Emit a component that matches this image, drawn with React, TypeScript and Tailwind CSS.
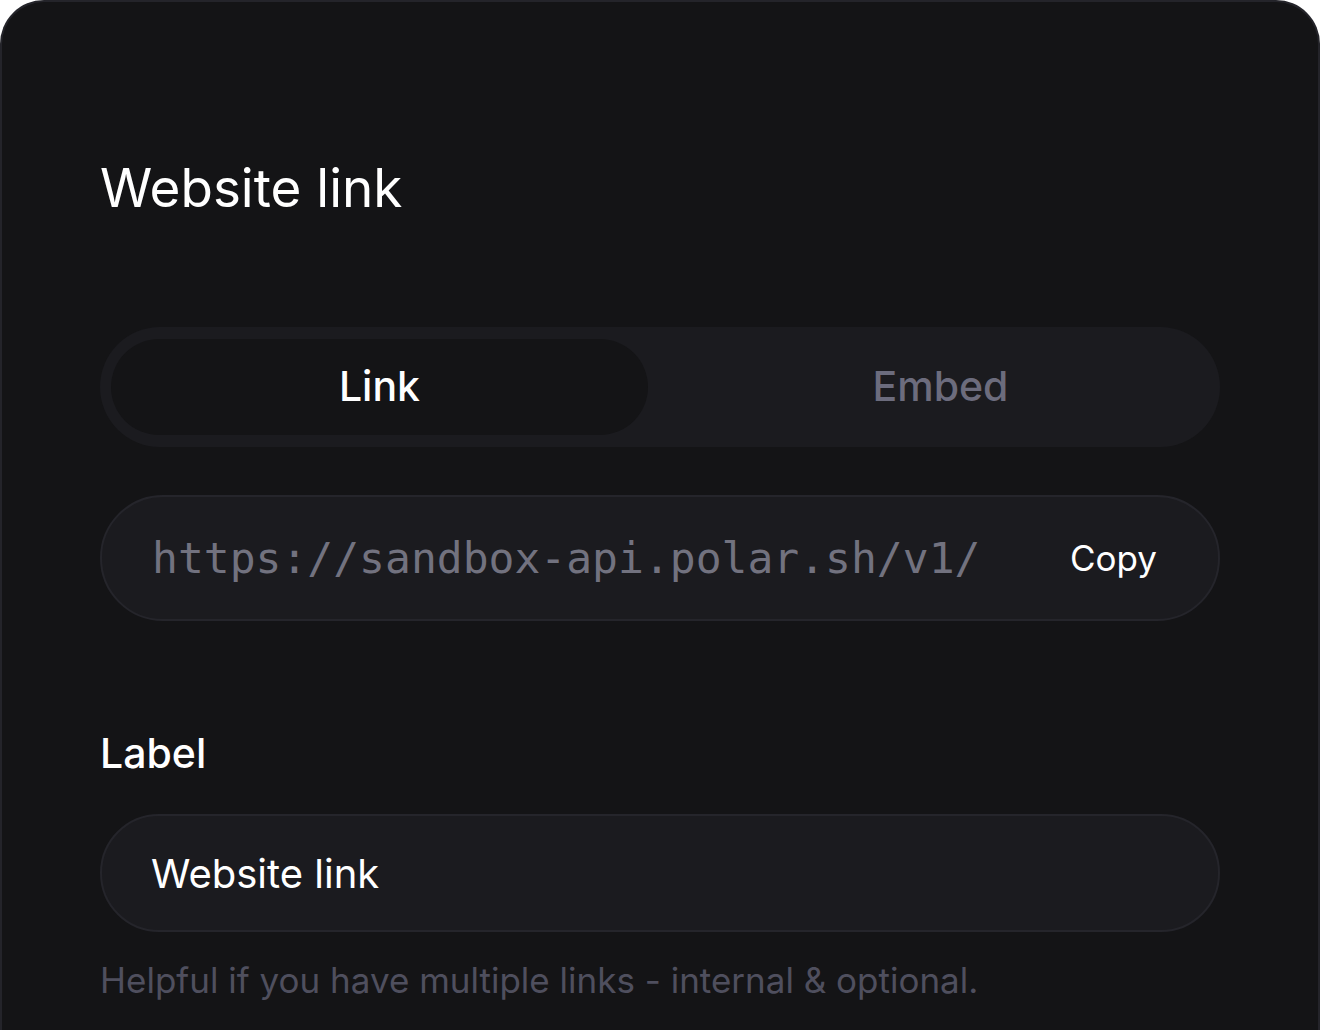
import { useState } from 'react';

const URL = 'https://sandbox-api.polar.sh/v1/';

export default function App() {
  const [tab, setTab] = useState<'link' | 'embed'>('link');
  const [label, setLabel] = useState('Website link');

  return (
    <div className="min-h-screen bg-white" style={{ fontFamily: 'Inter, "Noto Sans", sans-serif' }}>
      <div className="min-h-[1030px] w-full rounded-t-[44px] border-2 border-b-0 border-[#24242a] bg-[#141416] px-[98px] pt-[157px]">
        <h1 className="text-[53px] leading-[58px] font-normal text-white">Website link</h1>

        {/* Link / Embed switch */}
        <div className="mt-[110px] grid h-[120px] grid-cols-2 gap-[24px] rounded-full bg-[#1b1b1f] px-[11px] py-[12px]">
          <button
            onClick={() => setTab('link')}
            className={`rounded-full text-[41px] font-medium ${tab === 'link' ? 'bg-[#141416] text-white' : 'text-[#6c6c7d]'}`}
          >
            Link
          </button>
          <button
            onClick={() => setTab('embed')}
            className={`rounded-full text-[41px] font-medium ${tab === 'embed' ? 'bg-[#141416] text-white' : 'text-[#6c6c7d]'}`}
          >
            Embed
          </button>
        </div>

        {/* URL + copy */}
        <div className="mt-[48px] flex h-[126px] items-center justify-between rounded-full border-2 border-[#25252b] bg-[#1b1b1f] pl-[50px] pr-[61px]">
          <span
            className="text-[43px] text-[#72727f]"
            style={{ fontFamily: '"DejaVu Sans Mono", "Liberation Mono", monospace' }}
          >
            {URL}
          </span>
          <button className="text-[35px] font-normal text-white">Copy</button>
        </div>

        {/* Label field */}
        <label className="mt-[108px] block text-[41px] leading-[48px] font-medium text-white">Label</label>
        <input
          value={label}
          onChange={(e) => setLabel(e.target.value)}
          className="mt-[37px] h-[118px] w-full rounded-full border-2 border-[#25252b] bg-[#1b1b1f] pl-[49px] text-[40px] text-white outline-none"
        />
        <p className="mt-[26px] text-[35px] leading-[44px] text-[#4f4f5e]">
          Helpful if you have multiple links - internal &amp; optional.
        </p>
      </div>
    </div>
  );
}
